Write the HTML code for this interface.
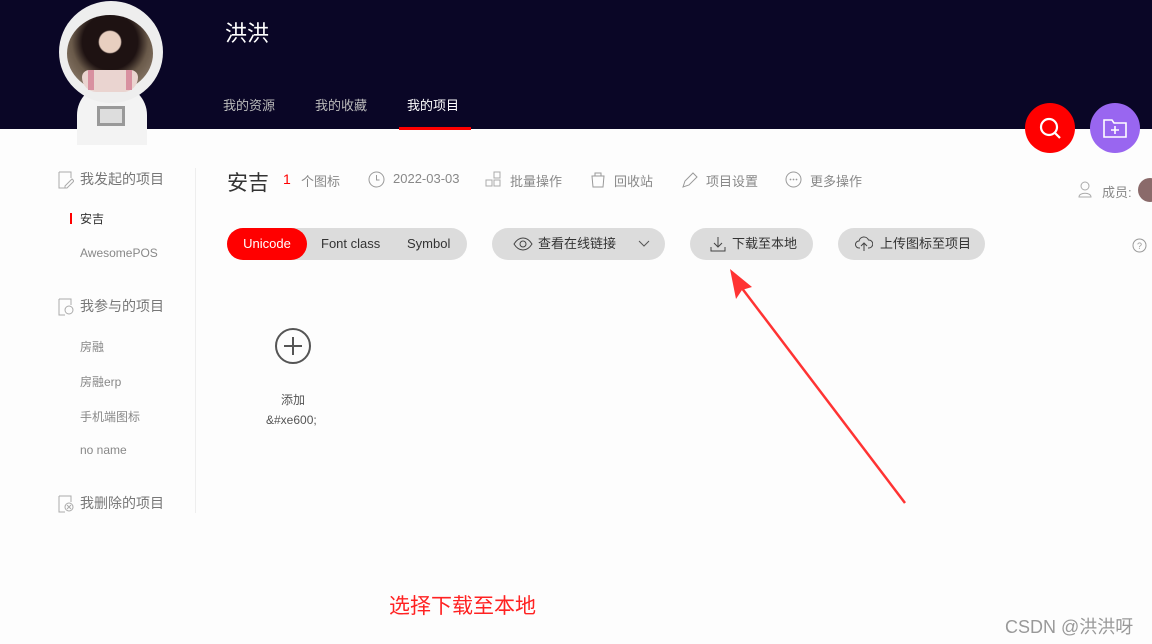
<!DOCTYPE html>
<html><head><meta charset="utf-8"><style>
*{margin:0;padding:0;box-sizing:border-box}
body{width:1152px;height:644px;background:#fdfdfd;font-family:"Liberation Sans","Noto Sans CJK SC",sans-serif;position:relative;overflow:hidden;color:#333}
.hd{position:absolute;left:0;top:0;width:1152px;height:129px;background:#0a0626}
.a{position:absolute}
.t{position:absolute;white-space:nowrap}
.g{color:#888;font-size:13px}
.pill{position:absolute;height:32px;border-radius:16px;background:#dcdcdc;font-size:13px;color:#333;line-height:32px}
</style></head><body>
<div class="hd"></div>
<div class="a" style="left:77px;top:85px;width:70px;height:60px;border-radius:30px 30px 0 0;background:#f3f3f3"></div>
<div class="a" style="left:97px;top:106px;width:28px;height:20px;border:3px solid #999;background:#ddd"></div>
<div class="a" style="left:59px;top:1px;width:104px;height:102px;border-radius:50%;background:#eee"></div>
<div class="a" style="left:67px;top:15px;width:86px;height:77px;border-radius:50%;background:radial-gradient(circle at 50% 35%,#e8cfc0 0 16%,#1e1212 18% 42%,#6a5a4a 58%,#a09080)"></div>
<div class="a" style="left:82px;top:70px;width:56px;height:22px;background:#ead4d0;border-radius:10px 10px 20px 20px"></div>
<div class="a" style="left:88px;top:70px;width:6px;height:20px;background:#d890a0"></div>
<div class="a" style="left:126px;top:70px;width:6px;height:20px;background:#d890a0"></div>
<div class="t" style="left:225px;top:16px;color:#fff;font-size:22px">洪洪</div>
<div class="t" style="left:223px;top:95px;color:#bbb;font-size:13px">我的资源</div>
<div class="t" style="left:315px;top:95px;color:#bbb;font-size:13px">我的收藏</div>
<div class="t" style="left:407px;top:95px;color:#fff;font-size:13px">我的项目</div>
<div class="a" style="left:399px;top:127px;width:72px;height:3px;background:#f00"></div>
<div class="a" style="left:1025px;top:103px;width:50px;height:50px;border-radius:50%;background:#f00"><svg width="50" height="50"><circle cx="24" cy="24" r="8" fill="none" stroke="#fff" stroke-width="2.2"/><path d="M30 30l5 5" stroke="#fff" stroke-width="2.2"/></svg></div>
<div class="a" style="left:1090px;top:103px;width:50px;height:50px;border-radius:50%;background:#9966f0"><svg width="50" height="50"><path d="M14 17h8l2 3h12v14H14z" fill="none" stroke="#fff" stroke-width="1.6"/><path d="M25 23v8M21 27h8" stroke="#fff" stroke-width="1.6"/></svg></div>
<div class="a" style="left:195px;top:168px;width:1px;height:345px;background:#eee"></div>
<svg class="a" style="left:58px;top:171px" width="16" height="18"><path d="M1 1h12v6M1 1v16h7" fill="none" stroke="#aaa"/><path d="M7 15l7-7 2 2-7 7h-2z" fill="none" stroke="#aaa"/></svg>
<div class="t" style="left:80px;top:169px;color:#777;font-size:14px">我发起的项目</div>
<div class="a" style="left:70px;top:213px;width:2px;height:11px;background:#f00"></div>
<div class="t" style="left:80px;top:210px;color:#333;font-size:12px">安吉</div>
<div class="t g" style="left:80px;top:246px;font-size:12px">AwesomePOS</div>
<svg class="a" style="left:58px;top:298px" width="16" height="18"><path d="M1 1h12v6M1 1v16h6" fill="none" stroke="#aaa"/><circle cx="11" cy="12" r="4" fill="none" stroke="#aaa"/></svg>
<div class="t" style="left:80px;top:296px;color:#777;font-size:14px">我参与的项目</div>
<div class="t g" style="left:80px;top:338px;font-size:12px">房融</div>
<div class="t g" style="left:80px;top:373px;font-size:12px">房融erp</div>
<div class="t g" style="left:80px;top:408px;font-size:12px">手机端图标</div>
<div class="t g" style="left:80px;top:443px;font-size:12px">no name</div>
<svg class="a" style="left:58px;top:495px" width="16" height="18"><path d="M1 1h12v6M1 1v16h6" fill="none" stroke="#aaa"/><circle cx="11" cy="12" r="4" fill="none" stroke="#aaa"/><path d="M9 10l4 4M13 10l-4 4" stroke="#aaa"/></svg>
<div class="t" style="left:80px;top:493px;color:#777;font-size:14px">我删除的项目</div>
<div class="t" style="left:227px;top:167px;font-size:21px;color:#333">安吉</div>
<div class="t" style="left:283px;top:171px;font-size:14px;color:#f00">1</div>
<div class="t g" style="left:301px;top:171px">个图标</div>
<svg class="a" style="left:368px;top:171px" width="17" height="17"><circle cx="8.5" cy="8.5" r="7.5" fill="none" stroke="#999"/><path d="M8.5 4v5h3" fill="none" stroke="#999"/></svg>
<div class="t g" style="left:393px;top:171px">2022-03-03</div>
<svg class="a" style="left:485px;top:171px" width="17" height="17"><rect x="1" y="9" width="6" height="6" fill="none" stroke="#aaa"/><rect x="9" y="9" width="6" height="6" fill="none" stroke="#aaa"/><rect x="9" y="1" width="6" height="6" fill="none" stroke="#aaa"/></svg>
<div class="t g" style="left:510px;top:171px">批量操作</div>
<svg class="a" style="left:590px;top:171px" width="16" height="17"><path d="M2 5h12l-1 11H3zM5 5V2h6v3" fill="none" stroke="#999"/></svg>
<div class="t g" style="left:614px;top:171px">回收站</div>
<svg class="a" style="left:681px;top:171px" width="18" height="18"><path d="M2 16l2-6 8-8 4 4-8 8z" fill="none" stroke="#999"/></svg>
<div class="t g" style="left:706px;top:171px">项目设置</div>
<svg class="a" style="left:785px;top:171px" width="17" height="17"><circle cx="8.5" cy="8.5" r="7.5" fill="none" stroke="#999"/><circle cx="5.5" cy="8.5" r=".9" fill="#999"/><circle cx="8.5" cy="8.5" r=".9" fill="#999"/><circle cx="11.5" cy="8.5" r=".9" fill="#999"/></svg>
<div class="t g" style="left:810px;top:171px">更多操作</div>
<svg class="a" style="left:1078px;top:181px" width="16" height="17"><circle cx="7" cy="5" r="4" fill="none" stroke="#aaa"/><path d="M1 16c0-5 12-5 12 0z" fill="none" stroke="#aaa"/></svg>
<div class="t g" style="left:1102px;top:182px">成员:</div>
<div class="a" style="left:1138px;top:178px;width:24px;height:24px;border-radius:50%;background:#8a6a6a"></div>
<div class="pill" style="left:227px;top:228px;width:240px"><div class="a" style="left:0;top:0;width:80px;height:32px;border-radius:16px;background:#f00;color:#fff;text-align:center">Unicode</div><span class="t" style="left:94px">Font class</span><span class="t" style="left:180px">Symbol</span></div>
<div class="pill" style="left:492px;top:228px;width:173px"><svg class="a" style="left:21px;top:9px" width="20" height="14"><path d="M1 7c5-8 13-8 18 0c-5 8-13 8-18 0z" fill="none" stroke="#444"/><circle cx="10" cy="7" r="3" fill="none" stroke="#444"/></svg><span class="t" style="left:46px">查看在线链接</span><svg class="a" style="left:146px;top:12px" width="12" height="8"><path d="M1 1l5 5 5-5" fill="none" stroke="#555"/></svg></div>
<div class="pill" style="left:690px;top:228px;width:123px"><svg class="a" style="left:20px;top:8px" width="16" height="16"><path d="M8 1v10M4 7l4 4 4-4M1 11v4h14v-4" fill="none" stroke="#444"/></svg><span class="t" style="left:42px">下载至本地</span></div>
<div class="pill" style="left:838px;top:228px;width:147px"><svg class="a" style="left:17px;top:8px" width="18" height="16"><path d="M5 12H4a3.5 3.5 0 0 1 0-7 5 5 0 0 1 9.5-1A4 4 0 0 1 14 12h-1M9 15V7M6 10l3-3 3 3" fill="none" stroke="#444"/></svg><span class="t" style="left:42px">上传图标至项目</span></div>
<svg class="a" style="left:1132px;top:238px" width="15" height="15"><circle cx="7.5" cy="7.5" r="6.5" fill="none" stroke="#999"/><text x="7.5" y="11" font-size="9" text-anchor="middle" fill="#999" font-family="Liberation Sans">?</text></svg>
<svg class="a" style="left:275px;top:328px" width="36" height="36"><circle cx="18" cy="18" r="17" fill="none" stroke="#555" stroke-width="2"/><path d="M18 9v18M9 18h18" stroke="#555" stroke-width="2"/></svg>
<div class="t" style="left:281px;top:391px;font-size:12px;color:#555">添加</div>
<div class="t" style="left:266px;top:413px;font-size:12px;color:#555">&amp;#xe600;</div>
<svg class="a" style="left:0;top:0" width="1152" height="644"><path d="M905 503L738 283" stroke="#f33" stroke-width="2.5"/><path d="M730 269l22 18-10 3-6 9z" fill="#f33"/></svg>
<div class="t" style="left:389px;top:590px;font-size:21px;color:#f22">选择下载至本地</div>
<div class="t" style="left:1005px;top:613px;font-size:18px;color:#999">CSDN @洪洪呀</div>
</body></html>
